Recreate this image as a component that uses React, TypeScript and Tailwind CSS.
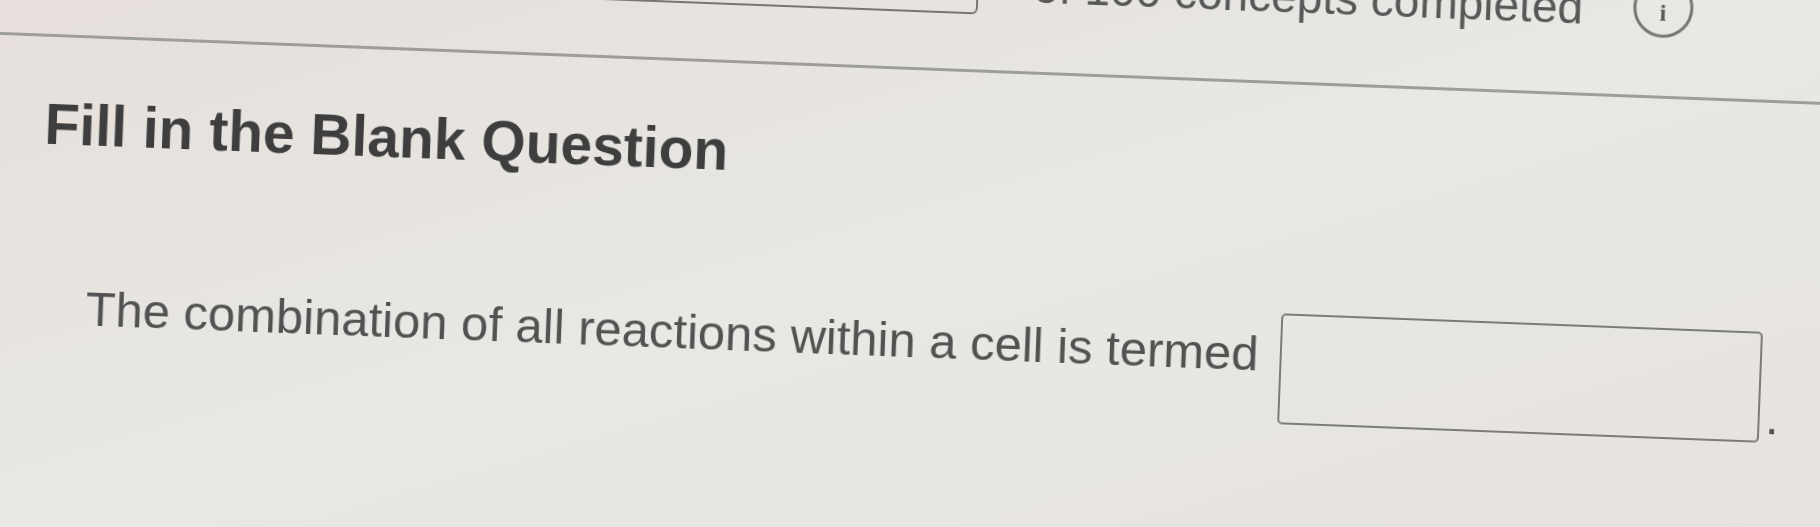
export default function App() {
  return (
    <div className="relative h-[527px] w-[1820px] overflow-hidden bg-linear-to-br from-[#e6dfdb] via-[#e8e8e4] to-[#e7e3de] font-['Liberation_Sans',Arial,sans-serif]">
      {/* photo of a screen: whole page is tilted a little */}
      <div className="flex h-full w-full rotate-[2.2deg] flex-col blur-[0.5px]">
        <div className="-mt-[52px] flex h-[64px] shrink-0 items-start">
          <div className="ml-[380px] mt-[12px] h-[52px] w-[588px] shrink-0 rounded-md border-2 border-[#767676]" />
          <span className="ml-[55px] mt-[11px] whitespace-nowrap text-[46px] leading-[46px] text-[#585858]">
            of 100 concepts completed
          </span>
          <span className="ml-[50px] mt-[1px] flex h-[60px] w-[60px] shrink-0 items-center justify-center rounded-full border-[3px] border-[#777777] pt-[10px] font-['Liberation_Serif',serif] text-[24px] font-bold leading-none text-[#5a5a5a]">
            i
          </span>
        </div>

        <div className="-mx-10 mt-[55px] h-[3px] shrink-0 bg-[#9d9d9b]" />

        <h1 className="ml-[40px] mt-[59px] whitespace-nowrap text-[57px] font-bold leading-[57px] text-[#3e3e3e]">
          Fill in the Blank Question
        </h1>

        <div className="ml-[88px] mt-[113px] flex items-start">
          <span className="mt-[17px] whitespace-nowrap text-[49px] leading-[49px] text-[#525252]">
            The combination of all reactions within a cell is termed
          </span>
          <div className="ml-[21px] h-[111px] w-[482px] shrink-0 rounded-[5px] border-2 border-[#7b7b7b]" />
          <span className="ml-[6px] mt-[61px] text-[49px] leading-[49px] text-[#525252]">.</span>
        </div>
      </div>
    </div>
  );
}
